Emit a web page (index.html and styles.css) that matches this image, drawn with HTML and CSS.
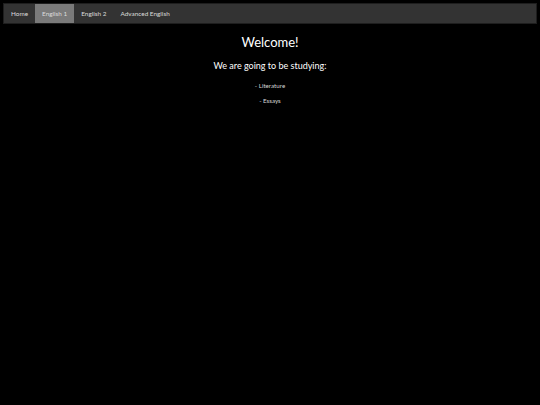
FILE: index.html
```html
<!DOCTYPE html>
<html>
<head>
<meta charset="utf-8">
<link rel="stylesheet" href="styles.css">
</head>
<body>
<nav class="nav">
  <a class="nav-item">Home</a>
  <a class="nav-item active">English 1</a>
  <a class="nav-item">English 2</a>
  <a class="nav-item">Advanced English</a>
</nav>
<main class="content">
  <h1 class="title">Welcome!</h1>
  <h2 class="subtitle">We are going to be studying:</h2>
  <p class="item">- Literature</p>
  <p class="item">- Essays</p>
</main>
</body>
</html>
```
FILE: styles.css
```css
html, body {
  margin: 0;
  padding: 0;
  background: #000;
}
body {
  padding: 3px;
  font-family: Lato, "Open Sans", sans-serif;
  font-weight: 400;
  color: #ddd;
}
.nav {
  display: flex;
  height: 19px;
  background: #333;
  border: 1px solid #1e1e1e;
}
.nav-item {
  display: flex;
  align-items: center;
  padding: 0 7px;
  font-size: 6.4px;
  color: #dcdcdc;
}
.nav-item.active {
  background: #7a7a7a;
}
.content {
  text-align: center;
}
.title {
  margin: 9px 0 0;
  font-size: 13px;
  font-weight: 400;
  color: #fff;
  line-height: 18px;
}
.subtitle {
  margin: 8px 0 0;
  font-size: 9px;
  font-weight: 400;
  color: #fff;
  line-height: 14px;
}
.item {
  margin: 8px 0 0;
  font-size: 6.2px;
  line-height: 9px;
  color: #d8d8d8;
}
.item + .item {
  margin-top: 6px;
}
```
